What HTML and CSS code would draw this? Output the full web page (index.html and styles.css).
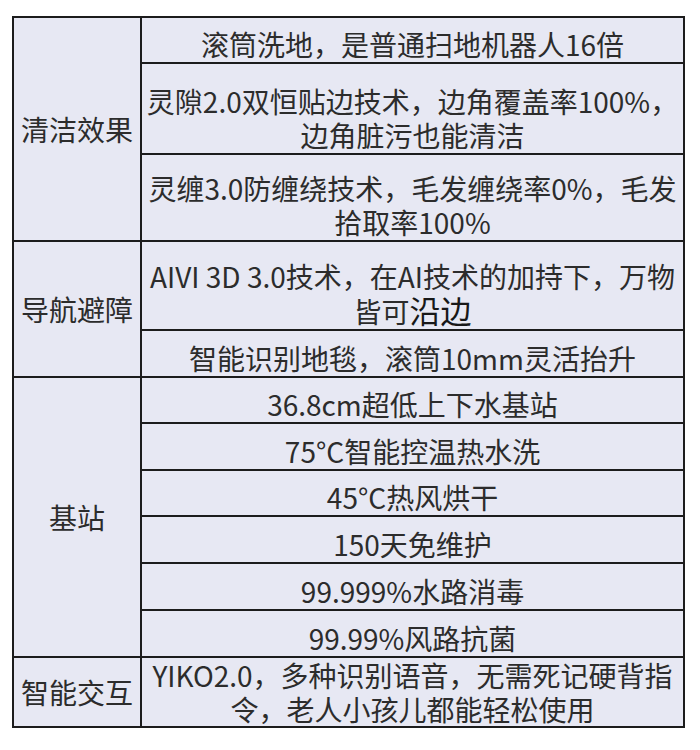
FILE: index.html
```html
<!DOCTYPE html>
<html lang="zh-CN">
<head>
<meta charset="utf-8">
<title>产品参数</title>
<link rel="stylesheet" href="styles.css">
</head>
<body>
<div class="page">
  <table class="spec">
    <colgroup>
      <col class="col-cat">
      <col class="col-desc">
    </colgroup>
    <tbody>
      <tr class="row-s1">
        <th class="cat" rowspan="3">清洁效果</th>
        <td class="desc">滚筒洗地，是普通扫地机器人16倍</td>
      </tr>
      <tr class="row-d1">
        <td class="desc">灵隙2.0双恒贴边技术，边角覆盖率100%，<br>边角脏污也能清洁</td>
      </tr>
      <tr class="row-d2">
        <td class="desc">灵缠3.0防缠绕技术，毛发缠绕率0%，毛发<br>拾取率100%</td>
      </tr>
      <tr class="row-d3">
        <th class="cat" rowspan="2">导航避障</th>
        <td class="desc">AIVI 3D 3.0技术，在AI技术的加持下，万物<br>皆可<span class="alt">沿边</span></td>
      </tr>
      <tr class="row-s2">
        <td class="desc">智能识别地毯，滚筒10mm灵活抬升</td>
      </tr>
      <tr class="row-s1">
        <th class="cat" rowspan="6">基站</th>
        <td class="desc">36.8cm超低上下水基站</td>
      </tr>
      <tr class="row-s2">
        <td class="desc">75°C智能控温热水洗</td>
      </tr>
      <tr class="row-s1">
        <td class="desc">45°C热风烘干</td>
      </tr>
      <tr class="row-s2">
        <td class="desc">150天免维护</td>
      </tr>
      <tr class="row-s2">
        <td class="desc">99.999%水路消毒</td>
      </tr>
      <tr class="row-s2">
        <td class="desc">99.99%风路抗菌</td>
      </tr>
      <tr class="row-last">
        <th class="cat">智能交互</th>
        <td class="desc desc-tight">YIKO2.0，多种识别语音，无需死记硬背指<br>令，老人小孩儿都能轻松使用</td>
      </tr>
    </tbody>
  </table>
</div>
</body>
</html>
```

FILE: styles.css
```css
html, body {
  margin: 0;
  padding: 0;
  background: #ffffff;
}

.page {
  padding: 16px 0 0 12px;
}

.spec {
  border-collapse: collapse;
  table-layout: fixed;
  width: 673px;
  background: #e7e8f3;
  border: 2px solid #1c1c1c;
  font-family: "Noto Sans CJK SC", "Noto Sans", sans-serif;
  font-size: 28px;
  line-height: 34px;
  color: #2c2c2c;
}

.col-cat {
  width: 128px;
}

.spec th,
.spec td {
  border: 2px solid #1c1c1c;
  padding: 0;
  font-weight: 400;
}

.cat {
  text-align: center;
  vertical-align: middle;
  padding-top: 8px;
  white-space: nowrap;
}

.spec .desc {
  text-align: center;
  vertical-align: bottom;
  padding: 0 2px 1px;
  white-space: nowrap;
}

.spec .desc-tight {
  vertical-align: middle;
  padding: 0 2px;
}

.alt {
  font-size: 31px;
  font-weight: 400;
  color: #181818;
}

.row-s1 { height: 46px; }
.row-s2 { height: 47px; }
.row-d1 { height: 91px; }
.row-d2 { height: 87px; }
.row-d3 { height: 89px; }
.row-last { height: 70px; }
```
